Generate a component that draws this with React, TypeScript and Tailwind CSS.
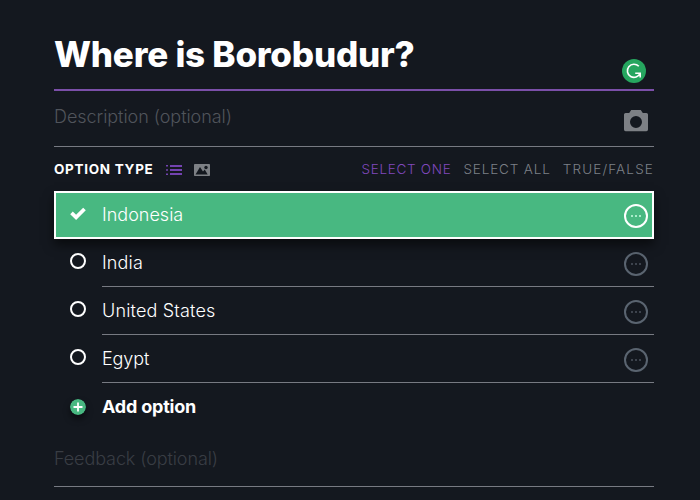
import React, { useState } from "react";

interface Answer {
  id: number;
  label: string;
  style: string;
}

const answers: Answer[] = [
  { id: 1, label: "Indonesia", style: "tracking-normal" },
  { id: 2, label: "India", style: "tracking-[0.15px]" },
  { id: 3, label: "United States", style: "tracking-[0.17px]" },
  { id: 4, label: "Egypt", style: "tracking-[-0.1px]" },
];

const modes = [
  { name: "SELECT ONE", style: "tracking-[0.7px]" },
  { name: "SELECT ALL", style: "tracking-[0.85px]" },
  { name: "TRUE/FALSE", style: "tracking-[1.15px]" },
];

const GrammarIcon = () => (
  <svg width="24" height="24" viewBox="0 0 24 24" fill="none">
    <circle cx="12" cy="12" r="12" fill="#26a65f" />
    <path d="M16.8 7.3A6.600 6.600 0 1 0 18.100 14.200M13.200 14.200h5v4.300" stroke="#fff" strokeWidth="1.6" />
  </svg>
);

const CameraIcon = () => (
  <svg width="24" height="22" viewBox="0 0 24 22">
    <path
      fill="#7d8085"
      fillRule="evenodd"
      d="M7.200 0h9.600l2 3H22.400a1.600 1.600 0 0 1 1.600 1.600v15a1.600 1.600 0 0 1-1.600 1.600H1.600A1.600 1.600 0 0 1 0 19.600v-15A1.600 1.600 0 0 1 1.600 3h3.600zM12 6a6 6 0 1 0 0 12a6 6 0 1 0 0-12z"
    />
  </svg>
);

const ListIcon = () => (
  <svg width="16" height="12" viewBox="0 0 16 12" fill="#7343b0">
    <path d="M0 1h2v1.500H0zM4 1h12v2H4zM0 5.300h2v1.500H0zM4 5h12v2H4zM0 9.500h2v1.500H0zM4 9h12v2H4z" />
  </svg>
);

const ImageIcon = () => (
  <svg width="16" height="12" viewBox="0 0 16 12">
    <rect width="16" height="12" rx="0.8" fill="#7d8085" />
    <path d="M1.500 10.500L6 3l3 4.500 1.700-2 3 5z" fill="#14181f" />
    <circle cx="12" cy="3.500" r="1.700" fill="#14181f" />
  </svg>
);

const MoreIcon = ({ active }: { active: boolean }) => (
  <svg width="24" height="24" viewBox="0 0 24 24" fill="none">
    <circle cx="12" cy="12" r="11" stroke={active ? "#fff" : "#5a6470"} strokeWidth="2" />
    <path
      d="M7 11h2v2H7zM11 11h2v2h-2zM15 11h2v2h-2z"
      fill={active ? "#a9ecca" : "#3d434d"}
    />
  </svg>
);

const CheckIcon = () => (
  <svg width="16" height="13" viewBox="0 0 16 13" fill="none">
    <path d="M1.500 5.900L6.100 10.400L14.500 2" stroke="#fff" strokeWidth="3.700" />
  </svg>
);

const PlusIcon = () => (
  <svg
    className="rounded-full shadow-[0_4px_6px_rgba(0,0,0,0.5)]"
    width="16"
    height="16"
    viewBox="0 0 16 16"
  >
    <circle cx="8" cy="8" r="8" fill="#48b881" />
    <path d="M8 3.500v9M3.500 8h9" stroke="#fff" strokeWidth="1.800" />
  </svg>
);

const App: React.FC = () => {
  const [selected, setSelected] = useState(1);
  const [mode, setMode] = useState("SELECT ONE");

  return (
    <div className="h-[500px] w-[700px] overflow-hidden bg-[#14181f] pl-[54px] pr-[46px] font-['Inter',sans-serif] text-white">
      <div className="flex h-[91px] justify-between border-b-2 border-[#7b4fa8]">
        <h1 className="mt-[33px] whitespace-nowrap text-[35px] leading-[42px] font-extrabold tracking-[-0.22px]">
          Where is Borobudur?
        </h1>
        <div className="mt-[59px] mr-2">
          <GrammarIcon />
        </div>
      </div>

      <div className="flex h-14 justify-between border-b border-[#777a82]">
        <div className="mt-[14px] text-[18px] leading-6 font-light tracking-[-0.05px] text-[#50545b]">
          Description (optional)
        </div>
        <div className="mt-[19px] mr-[6px]">
          <CameraIcon />
        </div>
      </div>

      <div className="flex h-11 items-center text-[13.5px] leading-5">
        <div className="w-[100px] whitespace-nowrap font-bold tracking-[0.7px]">OPTION TYPE</div>
        <div className="ml-3 flex gap-3 pt-0.5">
          <ListIcon />
          <ImageIcon />
        </div>
        <div className="ml-auto flex gap-3">
          {modes.map((m) => (
            <button
              key={m.name}
              onClick={() => setMode(m.name)}
              className={`whitespace-nowrap font-light ${m.style} ${
                mode === m.name ? "text-[#8048bd]" : "text-[#7c8087]"
              }`}
            >
              {m.name}
            </button>
          ))}
        </div>
      </div>

      {answers.map((answer) => {
        const active = selected === answer.id;
        return (
          <div
            key={answer.id}
            onClick={() => setSelected(answer.id)}
            className={`flex h-12 ${
              active
                ? "relative border-2 border-white bg-[#48b881] pl-[14px] shadow-[0_6px_10px_rgba(0,0,0,0.55)]"
                : "pl-4"
            }`}
          >
            <div className="mt-[14px] w-4 shrink-0">
              {active ? (
                <CheckIcon />
              ) : (
                <div className="h-4 w-4 rounded-full border-2 border-white" />
              )}
            </div>
            <div
              className={`ml-4 flex grow justify-between ${
                active ? "pr-1" : "border-b border-[#777a82] pr-[6px]"
              }`}
            >
              <div
                className={`text-[18px] leading-6 font-light ${answer.style} ${
                  active ? "mt-[10px]" : "mt-3"
                }`}
              >
                {answer.label}
              </div>
              <div className={active ? "mt-[11px]" : "mt-[13px]"}>
                <MoreIcon active={active} />
              </div>
            </div>
          </div>
        );
      })}

      <div className="flex h-12 items-center pl-4">
        <PlusIcon />
        <div className="ml-4 text-[18px] leading-6 font-bold tracking-[-0.2px]">Add option</div>
      </div>

      <div className="h-14 border-b border-[#777a82] pt-4 text-[18px] leading-6 font-light tracking-[-0.1px] text-[#393d44]">
        Feedback (optional)
      </div>
    </div>
  );
};

export default App;
